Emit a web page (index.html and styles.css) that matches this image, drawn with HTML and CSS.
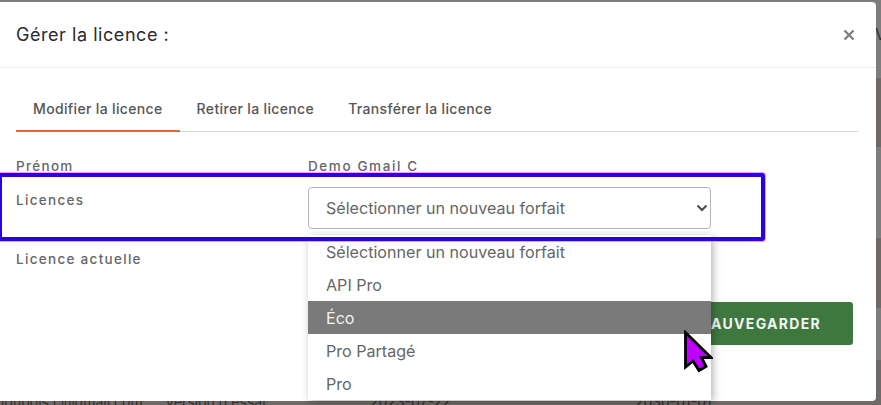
FILE: index.html
```html
<!DOCTYPE html>
<html lang="fr">
<head>
<meta charset="utf-8">
<title>Gérer la licence</title>
<link rel="stylesheet" href="styles.css">
</head>
<body>
<div class="backdrop">
  <span class="bg-edge">V</span>
  <div class="bg-row"><span class="c1">ldubois.c@gmail.com</span><span class="c2">Version d'essai</span><span class="c3">2023-07-22</span><span class="c4">2030-01-01</span></div>
</div>
<section class="modal">
  <header class="modal-head">
    <h2>Gérer la licence :</h2>
    <button class="close" aria-label="Fermer"><svg width="12" height="12" viewBox="0 0 12 12"><path d="M1.500 1.500l9 9M10.500 1.500l-9 9" stroke="#808080" stroke-width="2.400"/></svg></button>
  </header>
  <div class="modal-body">
    <nav class="tabs">
      <a class="tab active">Modifier la licence</a>
      <a class="tab">Retirer la licence</a>
      <a class="tab">Transférer la licence</a>
    </nav>
    <div class="row row-first"><div class="label">Prénom</div><div class="value">Demo Gmail C</div></div>
    <div class="row row-select">
      <div class="label">Licences</div>
      <div class="select-box">
        <span>Sélectionner un nouveau forfait</span>
        <svg width="12" height="8" viewBox="0 0 12 8"><path d="M1.500 1.500L6 6l4.500-4.500" fill="none" stroke="#444b55" stroke-width="2"/></svg>
      </div>
    </div>
    <div class="row row-current"><div class="label">Licence actuelle</div></div>
    <div class="actions"><button class="save">SAUVEGARDER</button></div>
  </div>
  <ul class="dropdown">
    <li>Sélectionner un nouveau forfait</li>
    <li>API Pro</li>
    <li class="hover">Éco</li>
    <li>Pro Partagé</li>
    <li>Pro</li>
  </ul>
  <div class="highlight"></div>
  <svg class="cursor" width="30" height="44" viewBox="0 0 30 44"><path d="M2.500 2.500V37L10 31L16 40.500L23 36.500L18.500 27.500H28Z" fill="#c000ff" stroke="#000" stroke-width="2.800"/></svg>
</section>
</body>
</html>
```
FILE: styles.css
```css
* { box-sizing: border-box; }
html, body { margin: 0; height: 100%; }
body {
  width: 881px;
  height: 405px;
  overflow: hidden;
  position: relative;
  background: #7d7d7d;
  font-family: Inter, "Noto Sans", sans-serif;
}
.backdrop {
  position: absolute;
  inset: 0;
  color: #2f2d2c;
  font-size: 14px;
  background: linear-gradient(#7d7d7d 78px, #6f6865 78px, #6f6865 147px, #7d7d7d 147px, #7d7d7d 238px, #6f6865 238px, #6f6865 308px, #7d7d7d 308px, #7d7d7d 360px, #6f6a68 360px);
}
.bg-edge { position: absolute; left: 875px; top: 24px; font-size: 16px; }
.bg-row { position: absolute; left: 0; top: 393px; }
.bg-row span { position: absolute; white-space: nowrap; }
.c1 { left: 1px; }
.c2 { left: 165px; }
.c3 { left: 370px; }
.c4 { left: 635px; }
.modal {
  position: relative;
  margin-top: 2px;
  width: 876px;
  height: 399px;
  background: #fff;
  border-radius: 0 4px 4px 0;
}
.modal-head {
  height: 66px;
  border-bottom: 1px solid #ececec;
  display: flex;
  align-items: center;
  justify-content: space-between;
  padding: 0 21px 0 16px;
}
.modal-head h2 { margin: 0; font-size: 18px; font-weight: 400; letter-spacing: 0.550px; color: #2b2b2b; }
.close { border: 0; background: none; padding: 0; display: flex; }
.modal-body { padding: 21px 18px 0 16px; }
.tabs { display: flex; border-bottom: 1px solid #d8d8d8; height: 43px; }
.tab {
  padding: 11px 17px 0;
  height: 43px;
  font-size: 14px;
  font-weight: 500;
  letter-spacing: 0.350px;
  color: #555;
  white-space: nowrap;
}
.tab.active { border-bottom: 2px solid #e0683a; }
.row { display: flex; font-size: 13.500px; font-weight: 500; color: #666; letter-spacing: 1.300px; }
.label { width: 292px; flex: none; }
.value { letter-spacing: 1.600px; }
.row-first { margin-top: 26px; height: 29px; }
.row-select { height: 42px; }
.row-select .label { padding-top: 5px; }
.row-current { margin-top: 22px; }
.select-box {
  width: 403px;
  height: 42px;
  border: 1px solid #b5b5b5;
  border-radius: 4px;
  display: flex;
  align-items: center;
  justify-content: space-between;
  padding: 0 2px 0 17px;
  font-size: 16.100px;
  font-weight: 400;
  letter-spacing: 0;
  color: #666;
}
.actions { display: flex; justify-content: flex-end; margin: 35px 5px 0 0; }
.save {
  height: 43px;
  width: 163px;
  padding: 0 32px 0 0;
  text-align: right;
  background: #3f783f;
  color: #f4f4f4;
  border: 0;
  border-radius: 3px;
  font: 700 14px Inter, sans-serif;
  letter-spacing: 1.300px;
}
.dropdown {
  position: absolute;
  left: 308px;
  top: 233px;
  width: 403px;
  height: 165px;
  margin: 0;
  padding: 0;
  list-style: none;
  background: #fff;
  box-shadow: 2px 2px 8px rgba(0, 0, 0, 0.300);
  font-size: 16.100px;
  color: #666;
}
.dropdown li { height: 33px; line-height: 35px; padding-left: 18px; }
.dropdown li.hover { background: #7a7a7a; color: #f2f2f2; }
.highlight {
  position: absolute;
  left: -2px;
  top: 171px;
  width: 767px;
  height: 68px;
  border: 4px solid #2a00e6;
  outline: 1px solid #f0a0ff;
  border-radius: 2px;
}
.cursor { position: absolute; left: 683px; top: 328px; }
```
